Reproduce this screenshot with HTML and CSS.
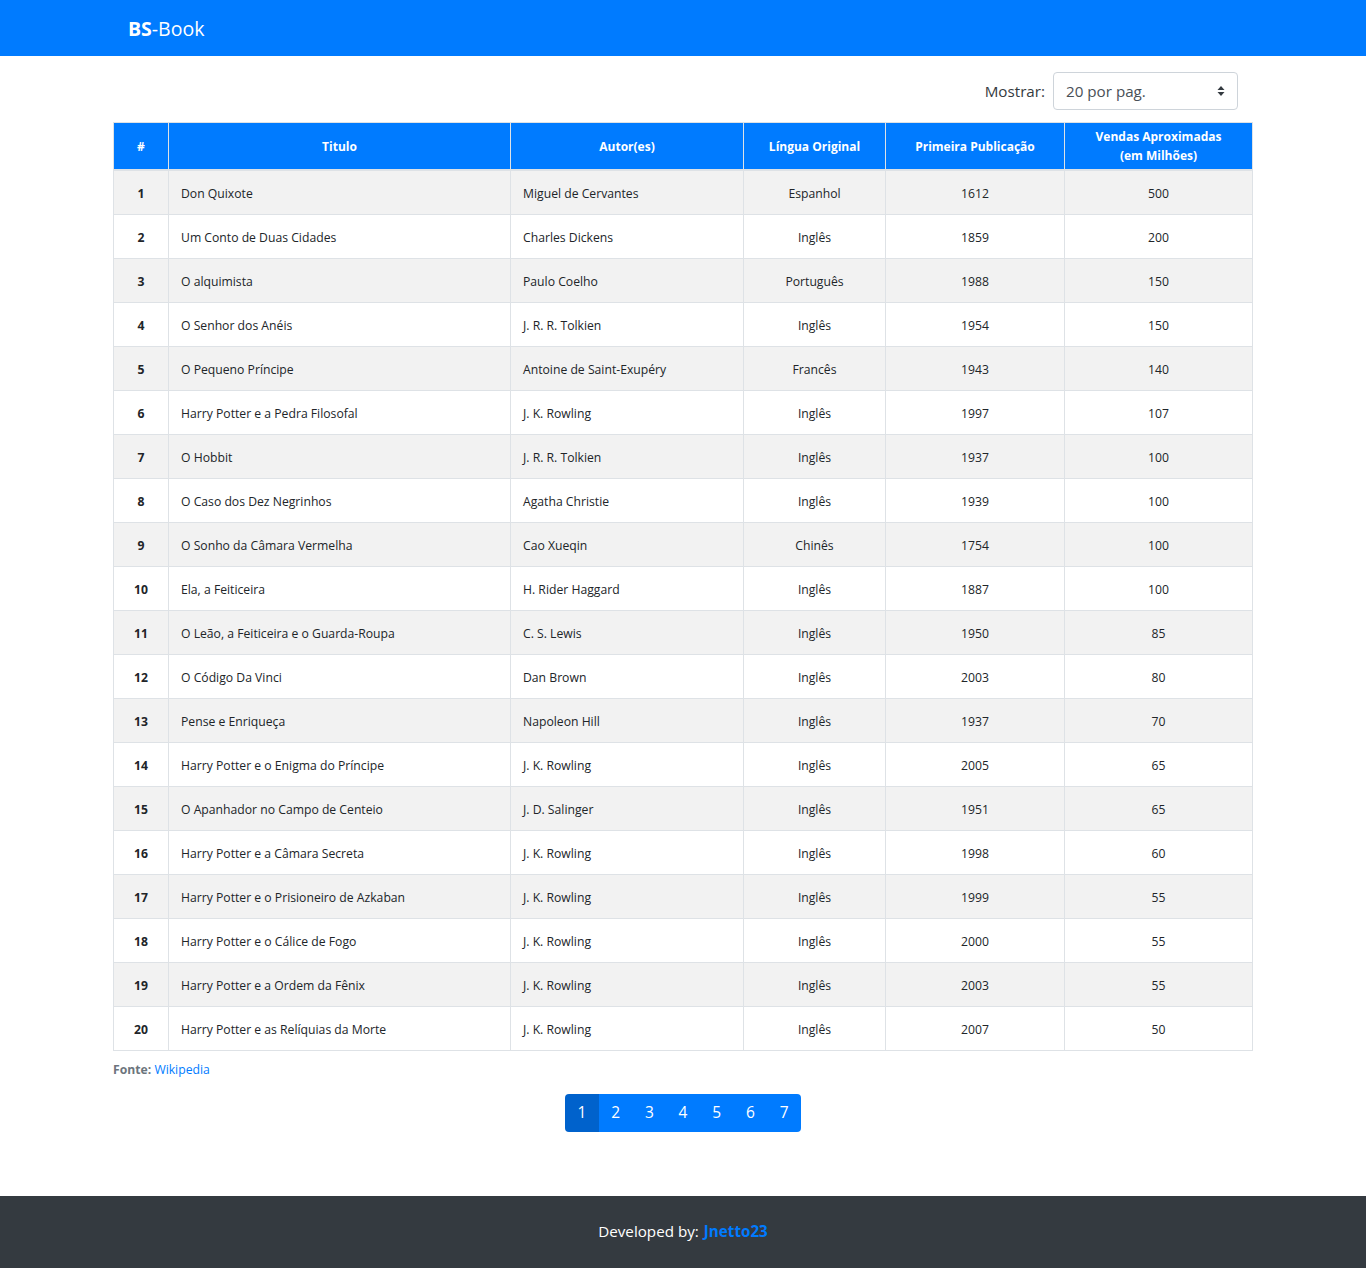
FILE: index.html
```html
<!DOCTYPE html>
<html lang="pt-br">
<head>
<meta charset="utf-8">
<title>BS-Book</title>
<link rel="stylesheet" href="styles.css">
</head>
<body>
<nav class="navbar">
  <div class="container">
    <a class="brand" href="#"><b>BS</b>-Book</a>
  </div>
</nav>
<main class="main">
  <div class="container">
    <div class="toolbar">
      <label class="show-label">Mostrar:</label>
      <div class="select">
        <span>20 por pag.</span>
        <svg class="caret" width="8" height="12" viewBox="0 0 8 12"><path d="M4 1 L7.5 5 H0.5 Z M4 11 L0.5 7 H7.5 Z" fill="#343a40"/></svg>
      </div>
    </div>
  </div>
  <div class="table-wrap">
    <table class="books">
      <colgroup>
        <col class="c-num"><col class="c-title"><col class="c-author"><col class="c-lang"><col class="c-year"><col class="c-sales">
      </colgroup>
      <thead>
        <tr><th>#</th><th>Titulo</th><th>Autor(es)</th><th>Língua Original</th><th>Primeira Publicação</th><th>Vendas Aproximadas<br>(em Milhões)</th></tr>
      </thead>
      <tbody>
        <tr><td class="n">1</td><td class="l">Don Quixote</td><td class="l">Miguel de Cervantes</td><td>Espanhol</td><td>1612</td><td>500</td></tr>
        <tr><td class="n">2</td><td class="l">Um Conto de Duas Cidades</td><td class="l">Charles Dickens</td><td>Inglês</td><td>1859</td><td>200</td></tr>
        <tr><td class="n">3</td><td class="l">O alquimista</td><td class="l">Paulo Coelho</td><td>Português</td><td>1988</td><td>150</td></tr>
        <tr><td class="n">4</td><td class="l">O Senhor dos Anéis</td><td class="l">J. R. R. Tolkien</td><td>Inglês</td><td>1954</td><td>150</td></tr>
        <tr><td class="n">5</td><td class="l">O Pequeno Príncipe</td><td class="l">Antoine de Saint-Exupéry</td><td>Francês</td><td>1943</td><td>140</td></tr>
        <tr><td class="n">6</td><td class="l">Harry Potter e a Pedra Filosofal</td><td class="l">J. K. Rowling</td><td>Inglês</td><td>1997</td><td>107</td></tr>
        <tr><td class="n">7</td><td class="l">O Hobbit</td><td class="l">J. R. R. Tolkien</td><td>Inglês</td><td>1937</td><td>100</td></tr>
        <tr><td class="n">8</td><td class="l">O Caso dos Dez Negrinhos</td><td class="l">Agatha Christie</td><td>Inglês</td><td>1939</td><td>100</td></tr>
        <tr><td class="n">9</td><td class="l">O Sonho da Câmara Vermelha</td><td class="l">Cao Xueqin</td><td>Chinês</td><td>1754</td><td>100</td></tr>
        <tr><td class="n">10</td><td class="l">Ela, a Feiticeira</td><td class="l">H. Rider Haggard</td><td>Inglês</td><td>1887</td><td>100</td></tr>
        <tr><td class="n">11</td><td class="l">O Leão, a Feiticeira e o Guarda-Roupa</td><td class="l">C. S. Lewis</td><td>Inglês</td><td>1950</td><td>85</td></tr>
        <tr><td class="n">12</td><td class="l">O Código Da Vinci</td><td class="l">Dan Brown</td><td>Inglês</td><td>2003</td><td>80</td></tr>
        <tr><td class="n">13</td><td class="l">Pense e Enriqueça</td><td class="l">Napoleon Hill</td><td>Inglês</td><td>1937</td><td>70</td></tr>
        <tr><td class="n">14</td><td class="l">Harry Potter e o Enigma do Príncipe</td><td class="l">J. K. Rowling</td><td>Inglês</td><td>2005</td><td>65</td></tr>
        <tr><td class="n">15</td><td class="l">O Apanhador no Campo de Centeio</td><td class="l">J. D. Salinger</td><td>Inglês</td><td>1951</td><td>65</td></tr>
        <tr><td class="n">16</td><td class="l">Harry Potter e a Câmara Secreta</td><td class="l">J. K. Rowling</td><td>Inglês</td><td>1998</td><td>60</td></tr>
        <tr><td class="n">17</td><td class="l">Harry Potter e o Prisioneiro de Azkaban</td><td class="l">J. K. Rowling</td><td>Inglês</td><td>1999</td><td>55</td></tr>
        <tr><td class="n">18</td><td class="l">Harry Potter e o Cálice de Fogo</td><td class="l">J. K. Rowling</td><td>Inglês</td><td>2000</td><td>55</td></tr>
        <tr><td class="n">19</td><td class="l">Harry Potter e a Ordem da Fênix</td><td class="l">J. K. Rowling</td><td>Inglês</td><td>2003</td><td>55</td></tr>
        <tr><td class="n">20</td><td class="l">Harry Potter e as Relíquias da Morte</td><td class="l">J. K. Rowling</td><td>Inglês</td><td>2007</td><td>50</td></tr>
      </tbody>
    </table>
    <p class="source"><b>Fonte:</b> <a href="#">Wikipedia</a></p>
    <ul class="pagination">
      <li class="page active">1</li>
      <li class="page">2</li>
      <li class="page">3</li>
      <li class="page">4</li>
      <li class="page">5</li>
      <li class="page">6</li>
      <li class="page">7</li>
    </ul>
  </div>
</main>
<footer class="footer">
  Developed by: <a href="#">Jnetto23</a>
</footer>
</body>
</html>
```

FILE: styles.css
```css
* { box-sizing: border-box; }
html, body { margin: 0; padding: 0; }
body {
  font-family: "Open Sans", "Noto Sans", sans-serif;
  color: #212529;
  background: #fff;
  font-size: 16px;
  line-height: 1.5;
}
a { color: #007bff; text-decoration: none; }

.container { width: 1140px; margin: 0 auto; padding: 0 15px; }

.navbar {
  background: #007bff;
  height: 56px;
  display: flex;
  align-items: center;
  padding-top: 2px;
}
.brand {
  color: #fff;
  font-size: 19.5px;
  line-height: 30px;
}
.brand b { font-weight: 700; }

.main { padding-top: 16px; padding-bottom: 64px; }

.toolbar {
  display: flex;
  justify-content: flex-end;
  align-items: center;
  gap: 8px;
  margin-bottom: 12px;
}
.show-label { font-size: 15.2px; color: #343a40; }
.select {
  width: 185px;
  height: 38px;
  border: 1px solid #ced4da;
  border-radius: 4px;
  padding: 0 12px;
  display: flex;
  align-items: center;
  justify-content: space-between;
  color: #495057;
  font-size: 15.2px;
}

.table-wrap { width: 1140px; margin: 0 auto; }

.books {
  width: 1140px;
  table-layout: fixed;
  border-collapse: collapse;
  font-size: 12.2px;
}
.c-num { width: 55px; }
.c-title { width: 342px; }
.c-author { width: 233px; }
.c-lang { width: 142px; }
.c-year { width: 179px; }
.c-sales { width: 188px; }

.books th {
  background: #007bff;
  color: #fff;
  font-weight: 700;
  font-size: 12px;
  height: 47px;
  padding: 4px 8px;
  text-align: center;
  vertical-align: middle;
  line-height: 19px;
  border: 1px solid #dee2e6;
  border-bottom: 2px solid #dee2e6;
}
.books thead th + th { border-left: 1px solid #fff; }
.books td {
  border: 1px solid #dee2e6;
  height: 44px;
  padding: 2px 12px 0;
  text-align: center;
  vertical-align: middle;
  line-height: 19px;
}
.books td.l { text-align: left; }
.books td.n { font-weight: 700; }
.books tbody tr:nth-child(odd) { background: #f2f2f2; }

.source {
  margin: 9px 0 0;
  font-size: 12.2px;
  color: #6c757d;
  line-height: 19px;
}
.source b { color: #6c757d; }

.pagination {
  list-style: none;
  margin: 15px auto 0;
  padding: 0;
  display: flex;
  justify-content: center;
}
.page {
  width: 33.7px;
  height: 38px;
  background: #007bff;
  color: #fff;
  display: flex;
  align-items: center;
  justify-content: center;
  font-size: 15.5px;
}
.page:first-child { border-radius: 4px 0 0 4px; }
.page:last-child { border-radius: 0 4px 4px 0; }
.page.active { background: #0062cc; }

.footer {
  background: #343a40;
  color: #fff;
  height: 72px;
  display: flex;
  align-items: center;
  justify-content: center;
  gap: 5px;
  font-size: 15.2px;
}
.footer a { font-weight: 700; color: #007bff; }
```
